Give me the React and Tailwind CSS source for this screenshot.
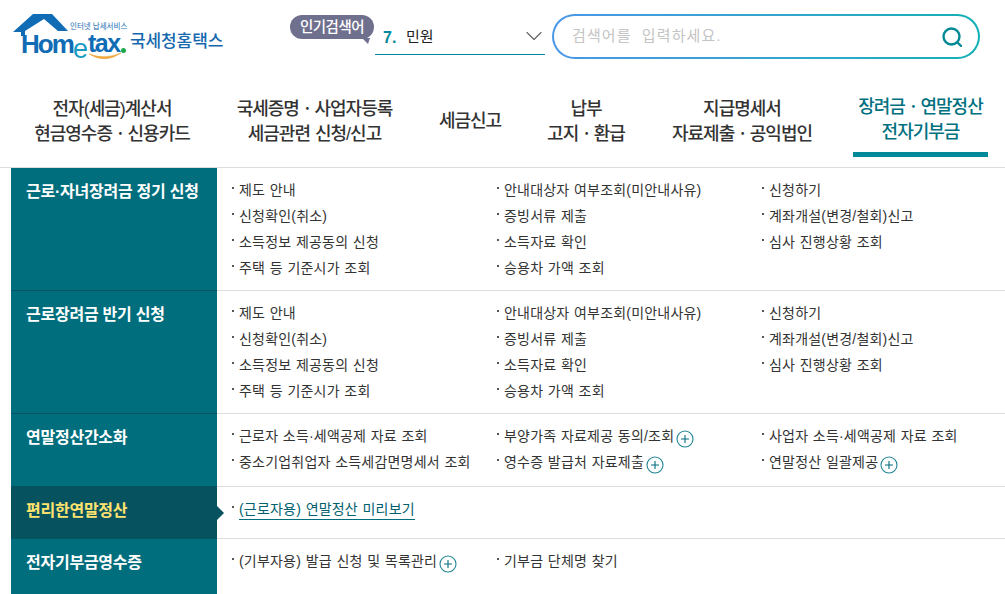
import React from 'react';
import { ChevronDown } from 'lucide-react';

const FONT = { fontFamily: '"Liberation Sans", "Noto Sans CJK KR", sans-serif' };
const LOGO_FONT = { fontFamily: '"Liberation Sans", sans-serif' };

const GRANT_LINKS = [
  ['제도 안내', '안내대상자 여부조회(미안내사유)', '신청하기'],
  ['신청확인(취소)', '증빙서류 제출', '계좌개설(변경/철회)신고'],
  ['소득정보 제공동의 신청', '소득자료 확인', '심사 진행상황 조회'],
  ['주택 등 기준시가 조회', '승용차 가액 조회', ''],
];

const NAV = [
  { lines: ['전자(세금)계산서', '현금영수증ㆍ신용카드'], w: 'w-[204px]' },
  { lines: ['국세증명ㆍ사업자등록', '세금관련 신청/신고'], w: 'w-[201px]' },
  { lines: ['세금신고'], w: 'w-[110px]' },
  { lines: ['납부', '고지ㆍ환급'], w: 'w-[122px]' },
  { lines: ['지급명세서', '자료제출ㆍ공익법인'], w: 'w-[190px]' },
];

function Logo() {
  return (
    <div className="relative w-[224px] h-[64px] shrink-0">
      <svg width="70" height="40" viewBox="0 0 70 40" className="absolute left-0 top-0">
        <path d="M13 32 L33 14 H52 L68 31 H58 L44 19 L25 31 V36 H21 V32 Z" fill="#0f6cb5" />
      </svg>
      <span className="absolute left-[70px] top-[23px] text-[7.5px] leading-[8px] text-[#1c6db3] whitespace-nowrap">인터넷 납세서비스</span>
      <span className="absolute left-[21px] top-[28px] text-[26px] leading-[32px] font-bold text-[#0f6cb5] tracking-[-2px]" style={LOGO_FONT}>Hom</span>
      <span className="absolute left-[73px] top-[35px] text-[27px] leading-[28px] text-[#199bc4]" style={LOGO_FONT}>e</span>
      <span className="absolute left-[88px] top-[28px] text-[25px] leading-[30px] font-bold text-[#0f6cb5] tracking-[-1.5px]" style={LOGO_FONT}>tax</span>
      <span className="absolute left-[121px] top-[48px] w-[5px] h-[5px] rounded-full bg-[#1ea84c]" />
      <svg width="36" height="12" viewBox="0 0 36 12" className="absolute left-[88px] top-[52px]">
        <path d="M1 2 Q17 12 33 1 Q17 8 1 2 Z" fill="#f0a63a" stroke="#f0a63a" strokeWidth="0.6" />
      </svg>
      <span className="absolute left-[130px] top-[30px] text-[17px] leading-[24px] font-medium text-[#1668ae] tracking-[-0.1px] whitespace-nowrap">국세청홈택스</span>
    </div>
  );
}

function PlusIcon() {
  return (
    <svg width="18" height="18" viewBox="0 0 18 18" className="ml-[2px] mt-[3px] shrink-0">
      <circle cx="9" cy="9" r="8" fill="none" stroke="#1f8594" strokeWidth="1.1" />
      <path d="M9 5 V13 M5 9 H13" stroke="#006e7c" strokeWidth="1.1" />
    </svg>
  );
}

function LinkItem({ label, plus, active }) {
  if (!label) return <div />;
  return (
    <div className="flex items-start h-[26px] relative pl-[7px]">
      <span className="absolute left-0 top-[6px] w-[2px] h-[2px] bg-[#555]" />
      <span
        className={
          active
            ? 'text-[14px] leading-[19px] h-[20px] tracking-[0.2px] [word-spacing:0.5px] text-[#00606e] border-b border-[#006e7c] whitespace-nowrap'
            : 'text-[14px] leading-[19px] tracking-[0.2px] [word-spacing:0.5px] text-[#333] whitespace-nowrap'
        }
      >
        {label}
      </span>
      {plus && <PlusIcon />}
    </div>
  );
}

function Row({ title, rows, h, selected, active }) {
  return (
    <div className={`flex ${h}`}>
      <div
        className={
          selected
            ? 'relative w-[206px] shrink-0 bg-[#07525f] border-b border-[#07525f] pl-[15px] pt-[12px] text-[16px] leading-[24px] font-bold text-[#ffe36e] tracking-[-0.25px] whitespace-nowrap'
            : 'relative w-[206px] shrink-0 bg-[#006e7c] border-b border-[#07525f] pl-[15px] pt-[12px] text-[16px] leading-[24px] font-bold text-white tracking-[-0.25px] whitespace-nowrap'
        }
      >
        {title}
        {selected && (
          <span className="absolute right-[-7px] top-[19px] w-0 h-0 border-y-[7px] border-y-transparent border-l-[7px] border-l-[#07525f]" />
        )}
      </div>
      <div className="pl-[15px] pt-[13px] grid grid-cols-[265px_265px_1fr] auto-rows-[26px] flex-1 border-b border-[#dddddd]">
        {rows.flat().map((item, i) => (
          <LinkItem key={i} label={item.label ?? item} plus={item.plus} active={active} />
        ))}
      </div>
    </div>
  );
}

export default function App() {
  return (
    <div className="w-[1005px] h-[594px] overflow-hidden bg-white" style={FONT}>
      {/* header */}
      <div className="flex h-[84px] items-start">
        <Logo />
        <div className="relative w-[66px] ml-[66px] mt-[15px]">
          <div className="absolute left-0 top-0 w-[84px] h-[24px] rounded-[12px] bg-[#6f708e] text-white text-[14.5px] leading-[24px] font-medium text-center tracking-[-0.5px] whitespace-nowrap">인기검색어</div>
          <svg width="8" height="6" viewBox="0 0 8 6" className="absolute left-[72px] top-[23px]">
            <path d="M0 0 H8 L6 6 Z" fill="#6f708e" />
          </svg>
        </div>
        <div className="ml-[19px] mt-[15px] w-[170px] h-[40px] border-b border-[#00899b] flex items-center justify-between pl-[8px]">
          <div className="flex items-center pt-[6px]">
            <span className="text-[16px] font-bold text-[#00899b] w-[23px]">7.</span>
            <span className="text-[15px] text-[#222]">민원</span>
          </div>
          <ChevronDown size={28} strokeWidth={1} className="text-[#666] -mr-[3px] mt-[2px]" />
        </div>
        <div className="ml-[7px] mt-[14px] w-[428px] h-[45px] rounded-[23px] p-[2px] bg-gradient-to-r from-[#4a97e8] to-[#0fb0b5]">
          <div className="w-full h-full rounded-[21px] bg-white flex items-center justify-between pl-[18px] pr-[16px]">
            <span className="text-[15px] text-[#c4c4c4] tracking-[1.1px] [word-spacing:5px] whitespace-nowrap">검색어를 입력하세요.</span>
            <svg width="20" height="20" viewBox="0 0 20 20" fill="none" stroke="#008a96" strokeLinecap="round" className="shrink-0">
              <circle cx="9.5" cy="9.5" r="8" strokeWidth="2.4" />
              <path d="M15.5 15.5 L19 19" strokeWidth="2.4" />
            </svg>
          </div>
        </div>
      </div>

      {/* main nav */}
      <div className="flex h-[84px] border-b border-[#dddddd] pl-[10px]">
        {NAV.map((n) => (
          <div key={n.lines[0]} className={`${n.w} flex flex-col items-center justify-center pb-[8px] text-[18px] leading-[25px] font-medium text-[#333] tracking-[-1px] [word-spacing:1px]`}>
            {n.lines.map((l) => (
              <span key={l} className="whitespace-nowrap">{l}</span>
            ))}
          </div>
        ))}
        <div className="w-[135px] ml-[16px] h-[73px] flex flex-col items-center justify-end pb-[7px] border-b-[5px] border-[#00899b] text-[18px] leading-[25px] font-medium text-[#00707f] tracking-[-1px] [word-spacing:1px]">
          <span className="whitespace-nowrap">장려금ㆍ연말정산</span>
          <span className="whitespace-nowrap">전자기부금</span>
        </div>
      </div>

      {/* menu rows */}
      <div className="pl-[11px]">
        <Row title="근로·자녀장려금 정기 신청" rows={GRANT_LINKS} h="h-[123px]" />
        <Row title="근로장려금 반기 신청" rows={GRANT_LINKS} h="h-[123px]" />
        <Row
          title="연말정산간소화"
          h="h-[73px]"
          rows={[
            ['근로자 소득·세액공제 자료 조회', { label: '부양가족 자료제공 동의/조회', plus: true }, '사업자 소득·세액공제 자료 조회'],
            ['중소기업취업자 소득세감면명세서 조회', { label: '영수증 발급처 자료제출', plus: true }, { label: '연말정산 일괄제공', plus: true }],
          ]}
        />
        <Row title="편리한연말정산" h="h-[52px]" selected active rows={[['(근로자용) 연말정산 미리보기', '', '']]} />
        <Row title="전자기부금영수증" h="h-[60px]" rows={[[{ label: '(기부자용) 발급 신청 및 목록관리', plus: true }, '기부금 단체명 찾기', '']]} />
      </div>
    </div>
  );
}
